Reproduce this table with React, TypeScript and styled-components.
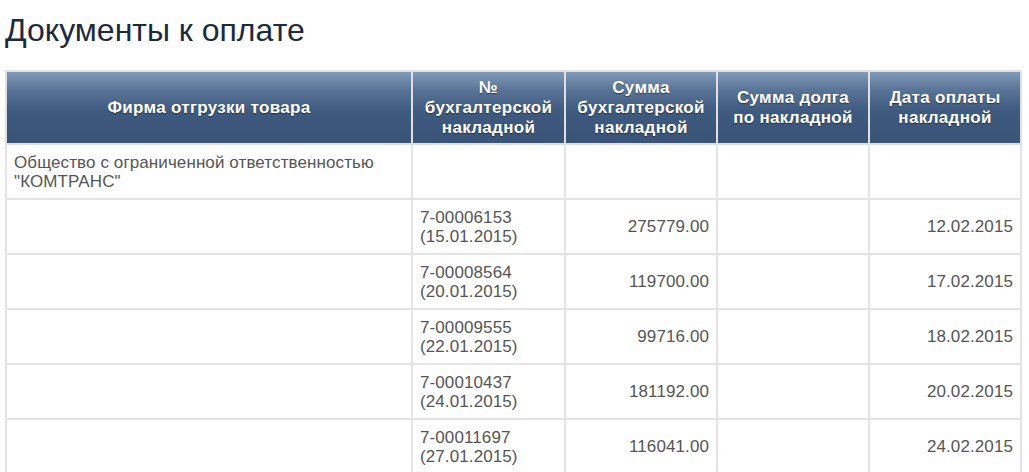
import React from "react";
import styled, {createGlobalStyle} from "styled-components";

const GlobalStyle = createGlobalStyle`
  html, body {
    margin: 0;
    padding: 0;
    background: #fff;
    font-family: "Liberation Sans", Arial, sans-serif;
  }
`
const Page = styled.div`
  padding: 0 9px 0 5px;
`
const Title = styled.h1`
  margin: 13px 0 23px;
  font-size: 32px;
  line-height: 34px;
  font-weight: normal;
  color: #1b2a3d;
`
const Table = styled.table`
  width: 1015px;
  border-collapse: collapse;
  table-layout: fixed;
`
const Head = styled.th`
  height: 71px;
  padding: 0 8px;
  border: 2px solid #dde1e6;
  background: linear-gradient(to bottom, #819ab7 0%, #5a7497 25%, #3f5a7f 55%, #3a5478 100%);
  color: #fff;
  font-size: 17px;
  line-height: 20px;
  font-weight: bold;
  letter-spacing: 0.3px;
  text-align: center;
  vertical-align: middle;
  text-shadow: 0 1px 1px rgba(0, 0, 0, 0.45);
`
const Row = styled.tr`
  height: 55px;
`
const Cell = styled.td<{ $align?: 'left' | 'right' }>`
  padding: 0 7px;
  border: 2px solid #e4e4e4;
  color: #555;
  font-size: 17px;
  line-height: 19px;
  letter-spacing: 0.1px;
  text-align: ${p => p.$align || 'left'};
  vertical-align: middle;
`

type Invoice = {
    number: string
    date: string
    sum: string
    debt: string
    payDate: string
}

const invoices: Invoice[] = [
    {number: '7-00006153', date: '15.01.2015', sum: '275779.00', debt: '', payDate: '12.02.2015'},
    {number: '7-00008564', date: '20.01.2015', sum: '119700.00', debt: '', payDate: '17.02.2015'},
    {number: '7-00009555', date: '22.01.2015', sum: '99716.00', debt: '', payDate: '18.02.2015'},
    {number: '7-00010437', date: '24.01.2015', sum: '181192.00', debt: '', payDate: '20.02.2015'},
    {number: '7-00011697', date: '27.01.2015', sum: '116041.00', debt: '', payDate: '24.02.2015'},
]

const App: React.FC = () => {
    return (
        <Page>
            <GlobalStyle/>
            <Title>Документы к оплате</Title>
            <Table>
                <colgroup>
                    <col style={{width: 406}}/>
                    <col style={{width: 153}}/>
                    <col style={{width: 152}}/>
                    <col style={{width: 152}}/>
                    <col style={{width: 152}}/>
                </colgroup>
                <thead>
                <tr>
                    <Head>Фирма отгрузки товара</Head>
                    <Head>№<br/>бухгалтерской накладной</Head>
                    <Head>Сумма бухгалтерской накладной</Head>
                    <Head>Сумма долга по накладной</Head>
                    <Head>Дата оплаты накладной</Head>
                </tr>
                </thead>
                <tbody>
                <Row>
                    <Cell>Общество с ограниченной ответственностью "КОМТРАНС"</Cell>
                    <Cell/>
                    <Cell/>
                    <Cell/>
                    <Cell/>
                </Row>
                {invoices.map(inv => (
                    <Row key={inv.number}>
                        <Cell/>
                        <Cell>{inv.number}<br/>({inv.date})</Cell>
                        <Cell $align="right">{inv.sum}</Cell>
                        <Cell $align="right">{inv.debt}</Cell>
                        <Cell $align="right">{inv.payDate}</Cell>
                    </Row>
                ))}
                </tbody>
            </Table>
        </Page>
    )
}
export default App
